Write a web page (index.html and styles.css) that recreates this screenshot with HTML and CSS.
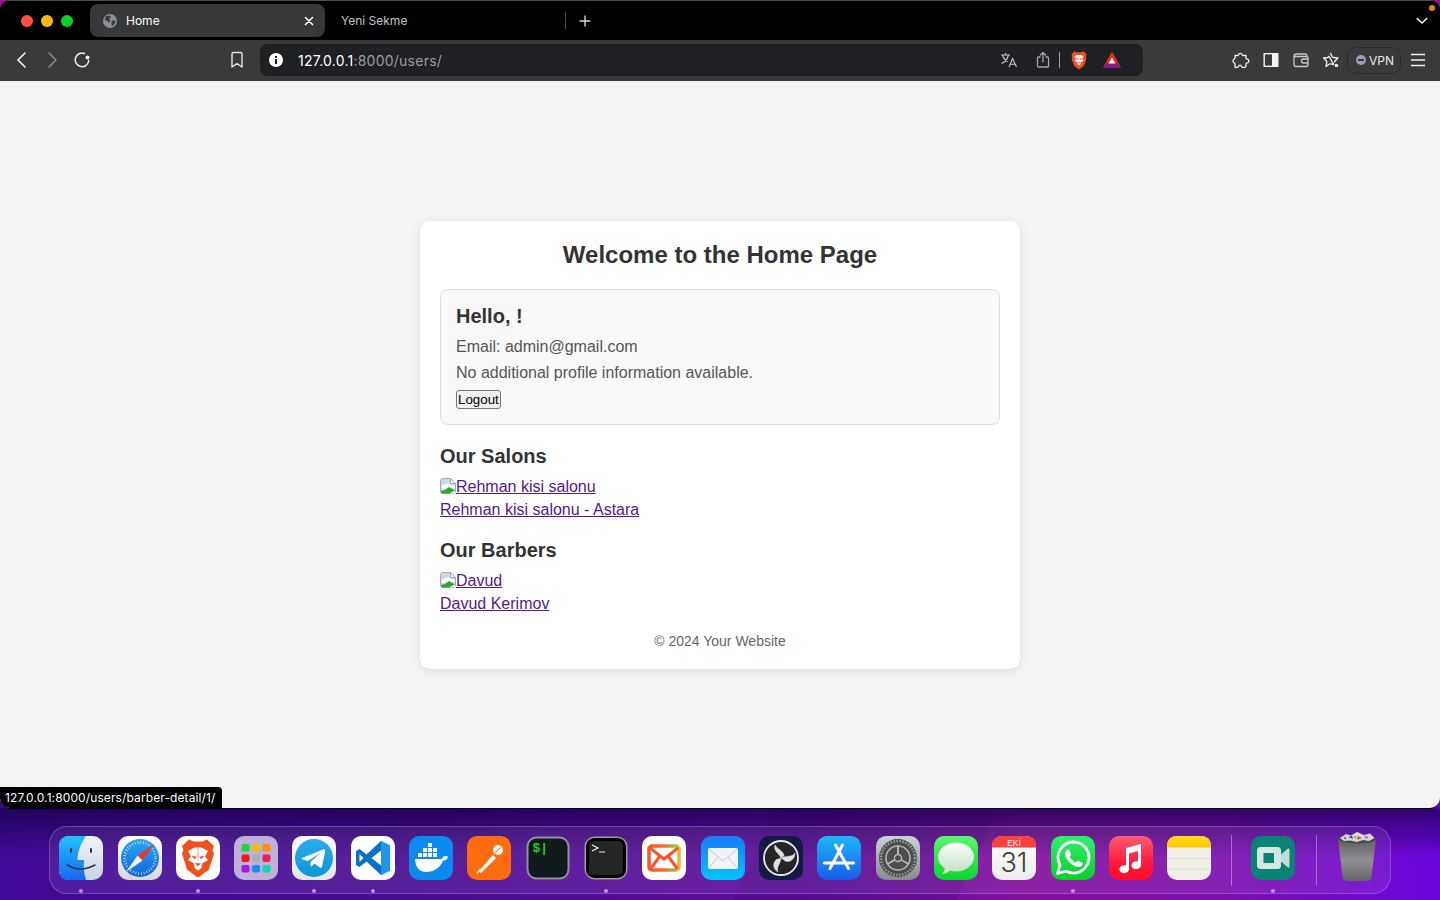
FILE: index.html
```html
<!DOCTYPE html>
<html lang="en">
<head>
<meta charset="utf-8">
<title>Home</title>
<link rel="stylesheet" href="styles.css">
</head>
<body>
<div class="window">
  <div class="tabstrip">
    <div class="lights"><span class="light red"></span><span class="light yellow"></span><span class="light green"></span></div>
    <div class="tab active">
      <svg class="favicon" viewBox="0 0 14 14"><circle cx="7" cy="7" r="7" fill="#8b8f99"/><path d="M3 2.2 L6.5 1.5 L8 3.2 L6 5 L7.5 6.5 L5.5 9 L4.5 7 L1.8 6 Z M9 6.5 L12.6 6.5 L11.5 10 L9 12 L8.4 9 Z" fill="#383838"/></svg>
      <span class="tab-title">Home</span>
      <svg class="tab-close" viewBox="0 0 10 10"><path d="M1.5 1.5 L8.5 8.5 M8.5 1.5 L1.5 8.5" stroke="#fff" stroke-width="1.6" stroke-linecap="round"/></svg>
    </div>
    <div class="tab inactive"><span>Yeni Sekme</span></div>
    <svg class="plus" viewBox="0 0 12 12"><path d="M6 .5 V11.5 M.5 6 H11.5" stroke="#d8d8d8" stroke-width="1.4"/></svg>
    <svg class="tab-menu" viewBox="0 0 12 8"><path d="M1.2 1.5 L6 6 L10.8 1.5" fill="none" stroke="#fff" stroke-width="1.5" stroke-linecap="round" stroke-linejoin="round"/></svg>
    <span class="notify-dot"></span>
  </div>

  <div class="toolbar">
    <button class="tool" aria-label="Back"><svg viewBox="0 0 20 20"><path d="M13 3 L6 10 L13 17" fill="none" stroke="#f2f2f2" stroke-width="1.6" stroke-linecap="round" stroke-linejoin="round"/></svg></button>
    <button class="tool" aria-label="Forward"><svg viewBox="0 0 20 20"><path d="M7 3 L14 10 L7 17" fill="none" stroke="#8a8a8a" stroke-width="1.6" stroke-linecap="round" stroke-linejoin="round"/></svg></button>
    <button class="tool" aria-label="Reload"><svg viewBox="0 0 20 20"><path d="M12.500 3.500 A6.800 6.800 0 1 0 16.800 10.500" fill="none" stroke="#f2f2f2" stroke-width="1.5" stroke-linecap="round"/><circle cx="15.500" cy="7.500" r="2" fill="#f2f2f2"/></svg></button>
    <button class="tool bookmark" aria-label="Bookmark"><svg viewBox="0 0 20 20"><path d="M5 4 Q5 2.5 6.5 2.5 H13.5 Q15 2.5 15 4 V17 L10 13.6 L5 17 Z" fill="none" stroke="#e4e4e4" stroke-width="1.4" stroke-linejoin="round"/></svg></button>
    <div class="urlbar">
      <svg class="info" viewBox="0 0 14 14"><circle cx="7" cy="7" r="7" fill="#fff"/><rect x="6" y="6" width="2" height="5" fill="#1f2023"/><rect x="6" y="3" width="2" height="2" fill="#1f2023"/></svg>
      <span class="url"><span class="url-host">127.0.0.1</span>:8000/users/</span>
      <svg class="url-icon translate" viewBox="0 0 18 16"><path d="M1 3 H10 M5.5 1 V3 M8.5 3 C7.5 7 5 10 1.5 11.5 M2.5 3 C3.5 6.5 5.5 8.5 8 9.5 M9 15 L12.5 6.5 L16.5 15 M10.3 12.3 H15" fill="none" stroke="#c9c9c9" stroke-width="1.1"/></svg>
      <svg class="url-icon share" viewBox="0 0 14 18"><path d="M4 6 H2.5 Q1.5 6 1.5 7 V15 Q1.5 16 2.5 16 H11.5 Q12.5 16 12.5 15 V7 Q12.5 6 11.5 6 H10 M7 11 V1.5 M4.3 4 L7 1.5 L9.7 4" fill="none" stroke="#a8a8a8" stroke-width="1.3" stroke-linecap="round" stroke-linejoin="round"/></svg>
      <span class="url-sep"></span>
      <svg class="url-icon brave-small" viewBox="0 0 24 24"><path d="M6.5 1.5 L9 2.8 H15 L17.5 1.5 L21 5 L20.2 8 L21 10 L18 19 L12.5 23 H11.5 L6 19 L3 10 L3.8 8 L3 5 Z" fill="#f1501f"/><path d="M6.5 7.5 L10 6 H14 L17.5 7.5 L15.6 11 L17.5 13 L14 14.8 L13.8 17.3 L12 18.5 L10.2 17.3 L10 14.8 L6.5 13 L8.4 11 Z" fill="#fff"/><path d="M8.800 9.800 L10.800 10.500 L10 11.800 Z M15.200 9.800 L13.200 10.500 L14 11.800 Z M10.500 14.800 H13.500 L12 16.300 Z M12 6.500 V13" fill="#f1501f" stroke="#f1501f" stroke-width=".4"/></svg>
      <svg class="url-icon bat" viewBox="0 0 18 16"><path d="M9 0 L18 15.500 H0 Z" fill="#ea2a1e"/><path d="M0 15.500 L3.800 11 H14.200 L18 15.500 Z" fill="#8a1a8f"/><path d="M9 5.500 L12.300 11.500 H5.700 Z" fill="#fff"/></svg>
    </div>
    <button class="tool first-ext" aria-label="Extensions"><svg viewBox="0 0 20 20"><path d="M7.500 5 C7.500 2.800 11 2.800 11 4.800 C11 5.500 11.800 5.500 12.600 5.500 H15 V8 C15 8.800 15.500 9 16.300 9.100 C18.300 9.400 18.300 12.600 16.300 12.900 C15.500 13 15 13.400 15 14.200 V16 C15 17 14.300 17.300 13.500 17.300 H11.500 C10.900 17.300 10.600 16.900 10.500 16.400 C10.200 14.800 7.800 14.800 7.500 16.400 C7.400 17 6.800 17.300 6.300 17.300 H4 V13.800 C4 13.200 3.600 13 3.100 12.800 C1.700 12 1.700 9.800 3.100 9 C3.600 8.800 4 8.400 4 7.800 V5.500 H6.500 C7 5.500 7.500 5.500 7.500 5 Z" fill="none" stroke="#f2f2f2" stroke-width="1.300" stroke-linejoin="round"/></svg></button>
    <button class="tool" aria-label="Sidebar"><svg viewBox="0 0 20 20"><rect x="3.2" y="3.7" width="13.6" height="12.6" fill="none" stroke="#f4f4f4" stroke-width="1.4"/><rect x="11" y="3.7" width="5.8" height="12.6" fill="#f4f4f4"/></svg></button>
    <button class="tool" aria-label="Wallet"><svg viewBox="0 0 20 20"><path d="M3 6.5 Q3 4 5.5 4 H14.5 Q16 4 16 6 M3 6.5 V14.5 Q3 16.5 5 16.5 H15 Q17 16.5 17 14.5 V8 Q17 6.5 15.5 6.5 H3 M17 9 H12.5 Q10.5 9 10.5 11 Q10.5 13 12.5 13 H17" fill="none" stroke="#c9c9c9" stroke-width="1.3"/></svg></button>
    <button class="tool" aria-label="Leo"><svg viewBox="0 0 20 20"><path d="M9.500 3 L11 6.500 Q11.500 7.500 12.500 7.500 L17 8 L14 11 Q13.500 11.700 13.700 12.500 M12.800 14.500 L9.500 13.800 Q9 13.800 8.500 14 L5 16.500 L5.800 12.300 Q6 11.500 5.300 10.800 L2.500 8 L6.500 7.500 Q7.500 7.300 8 6.300 Z" fill="none" stroke="#f2f2f2" stroke-width="1.300" stroke-linejoin="round"/><circle cx="15.500" cy="15.500" r="1.800" fill="#f2f2f2"/></svg></button>
    <div class="vpn"><span class="vpn-dot"></span><span>VPN</span></div>
    <button class="tool hamburger" aria-label="Menu"><svg viewBox="0 0 20 20"><path d="M3 4.5 H17 M3 10 H17 M3 15.5 H17" stroke="#f2f2f2" stroke-width="1.3"/></svg></button>
  </div>

  <main class="page">
    <section class="card">
      <h1 class="title">Welcome to the Home Page</h1>
      <div class="profile">
        <h2 class="heading heading-profile">Hello, !</h2>
        <p class="line">Email: admin@gmail.com</p>
        <p class="line">No additional profile information available.</p>
        <button class="logout">Logout</button>
      </div>
      <section class="group">
        <h2 class="heading">Our Salons</h2>
        <div class="item"><a class="link" href="#"><svg class="broken" viewBox="0 0 16 16"><path d="M0.5 3 Q0.5 0.5 3 0.5 H10.500 L15.500 5.500 V13 Q15.500 15.500 13 15.500 H3 Q0.500 15.500 0.500 13 Z" fill="#c9d8ee" stroke="#a9a9a9"/><path d="M10.500 .5 V5.500 H15.500 Z" fill="#f2f2f2" stroke="#a9a9a9"/><path d="M1.500 9 Q3 5.500 6 6.500 Q9 4.500 11 7 L15 8 V10 L2 11 Z" fill="#fff"/><path d="M1 14.500 V13 Q6 12 9 9 L15 12.500 V15.500 H2 Z" fill="#2fa82a"/><path d="M9 15.500 L15 12.500 V15.500 Z" fill="#fff"/></svg>Rehman kisi salonu</a></div>
        <div class="item name"><a class="link" href="#">Rehman kisi salonu - Astara</a></div>
      </section>
      <section class="group">
        <h2 class="heading">Our Barbers</h2>
        <div class="item"><a class="link" href="#"><svg class="broken" viewBox="0 0 16 16"><path d="M0.5 3 Q0.5 0.5 3 0.5 H10.500 L15.500 5.500 V13 Q15.500 15.500 13 15.500 H3 Q0.500 15.500 0.500 13 Z" fill="#c9d8ee" stroke="#a9a9a9"/><path d="M10.500 .5 V5.500 H15.500 Z" fill="#f2f2f2" stroke="#a9a9a9"/><path d="M1.500 9 Q3 5.500 6 6.500 Q9 4.500 11 7 L15 8 V10 L2 11 Z" fill="#fff"/><path d="M1 14.500 V13 Q6 12 9 9 L15 12.500 V15.500 H2 Z" fill="#2fa82a"/><path d="M9 15.500 L15 12.500 V15.500 Z" fill="#fff"/></svg>Davud</a></div>
        <div class="item name"><a class="link" href="#">Davud Kerimov</a></div>
      </section>
      <footer class="copyright">© 2024 Your Website</footer>
    </section>
    <div class="status">127.0.0.1:8000/users/barber-detail/1/</div>
  </main>
</div>

<nav class="dock">
  <div class="app running"><svg viewBox="0 0 44 44"><defs><linearGradient id="fa" x1="0" y1="0" x2="0" y2="1"><stop offset="0" stop-color="#1fc0fb"/><stop offset="1" stop-color="#1a68f2"/></linearGradient><linearGradient id="fb" x1="0" y1="0" x2="0" y2="1"><stop offset="0" stop-color="#f0f4f8"/><stop offset="1" stop-color="#c8d4e0"/></linearGradient></defs><rect width="44" height="44" rx="10" fill="url(#fb)"/><path d="M10 0 H27 C21 8 18.500 17 18.500 24 H25 C24.500 31 25 38 27 44 H10 Q0 44 0 34 V10 Q0 0 10 0 Z" fill="url(#fa)"/><rect x="11" y="12" width="2" height="5" rx="1" fill="#27303f"/><rect x="31" y="12" width="2" height="5" rx="1" fill="#27303f"/><path d="M8.500 29 Q21 37 36 29" fill="none" stroke="#27303f" stroke-width="1.500" stroke-linecap="round"/></svg></div>
  <div class="app"><svg viewBox="0 0 44 44"><defs><linearGradient id="sa" x1="0" y1="0" x2="0" y2="1"><stop offset="0" stop-color="#fff"/><stop offset="1" stop-color="#d8d8d8"/></linearGradient><linearGradient id="sb" x1="0" y1="0" x2="0" y2="1"><stop offset="0" stop-color="#27a9f2"/><stop offset="1" stop-color="#1464e0"/></linearGradient></defs><rect width="44" height="44" rx="10" fill="url(#sa)"/><circle cx="22" cy="22" r="19" fill="url(#sb)"/><circle cx="22" cy="22" r="15.500" fill="none" stroke="#dceaf8" stroke-width="2.500" stroke-dasharray="0.800 2"/><path d="M36 8 L19.500 19.500 L24.500 24.500 Z" fill="#f0352f"/><path d="M8 36 L19.500 19.500 L24.500 24.500 Z" fill="#f4f4f4"/></svg></div>
  <div class="app running"><svg viewBox="0 0 44 44"><rect width="44" height="44" rx="10" fill="#fff"/><path d="M13 3.500 L17.500 5.500 H26.500 L31 3.500 L38 10 L36.500 14 L38 17.500 L33 33.500 L23 41 H21 L11 33.500 L6 17.500 L7.500 14 L6 10 Z" fill="#f1501f"/><path d="M12 15 L18.500 11.500 H25.500 L32 15 L29 20.500 L32 24 L26 27.500 L25.500 32 L22 34.500 L18.500 32 L18 27.500 L12 24 L15 20.500 Z" fill="#fff"/><path d="M16 20 L20 21 L19 23 Z M28 20 L24 21 L25 23 Z M19.500 27.500 H24.500 L22 30 Z M22 12 V24" fill="#f1501f" stroke="#f1501f" stroke-width=".6"/></svg></div>
  <div class="app"><svg viewBox="0 0 44 44"><rect width="44" height="44" rx="10" fill="#bfb0d8"/><rect x="7.500" y="8" width="8" height="7.500" rx="2" fill="#1fd63a"/><rect x="18" y="8" width="8" height="7.500" rx="2" fill="#fbb90b"/><rect x="28.500" y="8" width="8" height="7.500" rx="2" fill="#f98f0e"/><rect x="7.500" y="18.500" width="8" height="7.500" rx="2" fill="#ea1b1b"/><rect x="18" y="18.500" width="8" height="7.500" rx="2" fill="#a8b0b6"/><rect x="28.500" y="18.500" width="8" height="7.500" rx="2" fill="#f01b5e"/><rect x="7.500" y="29" width="8" height="7.500" rx="2" fill="#a51bdf"/><rect x="18" y="29" width="8" height="7.500" rx="2" fill="#1b8bf5"/><rect x="28.500" y="29" width="8" height="7.500" rx="2" fill="#12d7b2"/></svg></div>
  <div class="app running"><svg viewBox="0 0 44 44"><defs><linearGradient id="ta" x1="0" y1="0" x2="0" y2="1"><stop offset="0" stop-color="#2aabee"/><stop offset="1" stop-color="#0e96d6"/></linearGradient><linearGradient id="tb" x1="0" y1="0" x2="0" y2="1"><stop offset="0" stop-color="#fff"/><stop offset="1" stop-color="#e6e6e6"/></linearGradient></defs><rect width="44" height="44" rx="10" fill="url(#tb)"/><circle cx="22" cy="22" r="19" fill="url(#ta)"/><path d="M10 22 L31 13.500 C32.500 13 33.500 13.800 33.200 15.300 L30 30.500 C29.700 31.800 28.700 32 27.800 31.400 L22.500 27.500 L19.800 30.200 C19.200 30.800 18.500 30.500 18.500 29.700 L18.500 26 L28.500 17 L15.800 25 L10.200 23.300 C9.300 23 9.300 22.400 10 22 Z" fill="#fff"/></svg></div>
  <div class="app running"><svg viewBox="0 0 44 44"><rect width="44" height="44" rx="10" fill="#fff"/><path d="M30 5 L39 9.500 V34.500 L30 39 L15.500 25.500 L8.500 31 L5 29 V15 L8.500 13 L15.500 18.500 Z M30 14.500 L20.500 22 L30 29.500 Z M8.500 18 V26 L12.500 22 Z" fill="#0a6fc2" fill-rule="evenodd"/><path d="M30 5 L39 9.500 V34.500 L30 39 Z" fill="#2197e8"/></svg></div>
  <div class="app"><svg viewBox="0 0 44 44"><rect width="44" height="44" rx="10" fill="#0b8af0"/><path d="M6 23 H33 C33.500 20.500 36 19 39 20.500 C38.500 23 37 24.500 34 24.500 C31 32 25 36 17 36 C10 36 6.500 31 6 23 Z" fill="#fff"/><path d="M9 17 H13 V21 H9 Z M14 17 H18 V21 H14 Z M19 17 H23 V21 H19 Z M24 17 H28 V21 H24 Z M14 12 H18 V16 H14 Z M19 12 H23 V16 H19 Z M24 12 H28 V16 H24 Z M19 7 H23 V11 H19 Z" fill="#fff"/></svg></div>
  <div class="app"><svg viewBox="0 0 44 44"><rect width="44" height="44" rx="10" fill="#ff6c0f"/><path d="M12 35 L26 19 L29 22 L14 37 Z" fill="#fff"/><circle cx="31" cy="14" r="5" fill="#fff"/><path d="M9 38 L12.500 33 L14.500 35 Z" fill="#fff"/><path d="M28 17 L34 11" stroke="#ff6c0f" stroke-width="1"/></svg></div>
  <div class="app"><svg viewBox="0 0 44 44"><rect x=".5" y=".5" width="43" height="43" rx="10" fill="#8c9498"/><rect x="2.500" y="2.500" width="39" height="39" rx="8" fill="#10191c"/><text class="iterm-text" x="6.500" y="16">$|</text></svg></div>
  <div class="app running"><svg viewBox="0 0 44 44"><rect x=".5" y=".5" width="43" height="43" rx="10" fill="#9a9a9a"/><rect x="2" y="2" width="40" height="40" rx="8.500" fill="#000"/><rect x="5" y="5" width="34" height="34" rx="5" fill="#252525"/><path d="M8 9 L14 12 L8 15 M15 16 H21" fill="none" stroke="#f0f0f0" stroke-width="1.200"/></svg></div>
  <div class="app"><svg viewBox="0 0 44 44"><defs><linearGradient id="ma" x1="0" y1="0" x2="1" y2="0"><stop offset="0" stop-color="#f7552c"/><stop offset=".55" stop-color="#f8702c"/><stop offset=".78" stop-color="#7fc05a"/><stop offset="1" stop-color="#f8b32c"/></linearGradient></defs><rect width="44" height="44" rx="10" fill="#fff"/><rect x="7" y="10" width="30" height="24" rx="3" fill="none" stroke="url(#ma)" stroke-width="3.500"/><path d="M8 12 L22 23 L36 12 M8.500 33 L18 20 M35.500 33 L26 20" fill="none" stroke="#f7552c" stroke-width="3"/></svg></div>
  <div class="app"><svg viewBox="0 0 44 44"><defs><linearGradient id="ea" x1="0" y1="0" x2="0" y2="1"><stop offset="0" stop-color="#1a7bf8"/><stop offset="1" stop-color="#05c4fb"/></linearGradient></defs><rect width="44" height="44" rx="10" fill="url(#ea)"/><rect x="7" y="12" width="30" height="21" rx="2" fill="#f1f3f6"/><path d="M7.500 13 L22 25 L36.500 13 M7.500 32 L17.500 21 M36.500 32 L26.500 21" fill="none" stroke="#bcc4d0" stroke-width=".9"/></svg></div>
  <div class="app"><svg viewBox="0 0 44 44"><rect width="44" height="44" rx="10" fill="#141a44"/><circle cx="22" cy="22" r="17" fill="#252528" stroke="#e8e8e8" stroke-width="1.800"/><path d="M22 22 C20 17 14 15 16 9 C19 14 25 15 25 20 M22 22 C27 19 33 22 36 17 C36 23 31 27 26 25 M22 22 C22 27 17 31 19 36 C14 33 13 27 18 23" fill="#e0e0e0" stroke="#e0e0e0" stroke-width=".5"/></svg></div>
  <div class="app"><svg viewBox="0 0 44 44"><defs><linearGradient id="aa" x1="0" y1="0" x2="0" y2="1"><stop offset="0" stop-color="#1db6f8"/><stop offset="1" stop-color="#1a5ce8"/></linearGradient></defs><rect width="44" height="44" rx="10" fill="url(#aa)"/><path d="M25.500 9 L13 32.500 M18.500 9 L31.500 32.500 M7.500 27 H36.500" stroke="#fff" stroke-width="3" stroke-linecap="round"/></svg></div>
  <div class="app"><svg viewBox="0 0 44 44"><defs><linearGradient id="ga" x1="0" y1="0" x2="0" y2="1"><stop offset="0" stop-color="#c9d2d8"/><stop offset="1" stop-color="#8a8a8a"/></linearGradient></defs><rect width="44" height="44" rx="10" fill="url(#ga)"/><circle cx="22" cy="22" r="19" fill="#4d4d4f"/><circle cx="22" cy="22" r="17" fill="none" stroke="#9a9a9a" stroke-width="2.500" stroke-dasharray="1.500 1.500"/><circle cx="22" cy="22" r="12" fill="none" stroke="#b6b6b6" stroke-width="1.600"/><path d="M22 22 V10 M22 22 L11.500 28 M22 22 L32.500 28" stroke="#b6b6b6" stroke-width="2"/><circle cx="22" cy="22" r="3.500" fill="#4d4d4f" stroke="#b6b6b6" stroke-width="1.400"/></svg></div>
  <div class="app"><svg viewBox="0 0 44 44"><defs><linearGradient id="me" x1="0" y1="0" x2="0" y2="1"><stop offset="0" stop-color="#5cf66f"/><stop offset="1" stop-color="#08d62e"/></linearGradient><linearGradient id="mf" x1="0" y1="0" x2="0" y2="1"><stop offset="0" stop-color="#fff"/><stop offset="1" stop-color="#c4e0c8"/></linearGradient></defs><rect width="44" height="44" rx="10" fill="url(#me)"/><ellipse cx="22" cy="21" rx="18" ry="14.500" fill="url(#mf)"/><path d="M11 30 Q11 36 7.500 38 Q14 38 17 33 Z" fill="#d4e6d6"/></svg></div>
  <div class="app"><svg viewBox="0 0 44 44"><defs><linearGradient id="ca" x1="0" y1="0" x2="0" y2="1"><stop offset="0" stop-color="#fff"/><stop offset="1" stop-color="#ececec"/></linearGradient></defs><rect width="44" height="44" rx="10" fill="url(#ca)"/><path d="M0 11.500 V10 Q0 0 10 0 H34 Q44 0 44 10 V11.500 Z" fill="#f8413a"/><text class="cal-month" x="22" y="9.500">EKİ</text><text class="cal-day" x="22" y="36">31</text></svg></div>
  <div class="app running"><svg viewBox="0 0 44 44"><defs><linearGradient id="wa" x1="0" y1="0" x2="0" y2="1"><stop offset="0" stop-color="#2ff06a"/><stop offset="1" stop-color="#09cf2b"/></linearGradient></defs><rect width="44" height="44" rx="10" fill="url(#wa)"/><path d="M22.500 6 A15.500 15.500 0 0 0 9 29 L6.500 37.500 L15.200 35.200 A15.500 15.500 0 1 0 22.500 6 Z" fill="none" stroke="#fff" stroke-width="2.800" stroke-linejoin="round"/><path d="M16.500 13.500 C15 14.200 13.500 16 14 18.500 C15 23.500 21 30 26.500 31 C29 31.400 31 30.300 31.500 28.500 C31.700 27.500 31.700 27 31.300 26.700 L27.500 24.800 C26.900 24.500 26.500 24.700 26 25.300 L25 26.500 C22.700 25.700 19.700 23 18.700 20.700 L19.800 19.300 C20.200 18.800 20.200 18.400 20 18 L18.300 14 C18 13.500 17.200 13.400 16.500 13.500 Z" fill="#fff"/></svg></div>
  <div class="app"><svg viewBox="0 0 44 44"><defs><linearGradient id="mu" x1="0" y1="0" x2="0" y2="1"><stop offset="0" stop-color="#fb5c74"/><stop offset=".6" stop-color="#ff1a3c"/><stop offset="1" stop-color="#ff0a2a"/></linearGradient></defs><rect width="44" height="44" rx="10" fill="url(#mu)"/><path d="M17 12 L32 8 V29 A4.800 4 0 1 1 29 25.500 V15 L20 17.500 V33 A4.800 4 0 1 1 17 29.500 Z" fill="#fff"/></svg></div>
  <div class="app"><svg viewBox="0 0 44 44"><defs><linearGradient id="no" x1="0" y1="0" x2="0" y2="1"><stop offset="0" stop-color="#ffdc1a"/><stop offset="1" stop-color="#fdc705"/></linearGradient></defs><rect width="44" height="44" rx="10" fill="#f1eee8"/><path d="M0 11.500 V10 Q0 0 10 0 H34 Q44 0 44 10 V11.500 Z" fill="url(#no)"/><path d="M0 22.500 H44 M0 33 H44" stroke="#d4d1ca" stroke-width=".7"/></svg></div>
  <span class="dock-sep"></span>
  <div class="app running"><svg viewBox="0 0 44 44"><rect width="44" height="44" rx="10" fill="#0b8276"/><rect x="6" y="11" width="24" height="22" rx="3.500" fill="#d3e6e2"/><rect x="12.500" y="17" width="10.500" height="10" fill="#0b8276"/><path d="M30 18.500 L37 12.500 Q38.500 12 38.500 13.500 V30.500 Q38.500 32 37 31.500 L30 25.500 Z" fill="#c2dcd8"/></svg></div>
  <span class="dock-sep"></span>
  <div class="app trash"><svg viewBox="0 0 44 52"><defs><linearGradient id="tr" x1="0" y1="0" x2="0" y2="1"><stop offset="0" stop-color="#5e5e62"/><stop offset=".5" stop-color="#8f8f93"/><stop offset="1" stop-color="#66666a"/></linearGradient></defs><path d="M3 8 Q22 15 41 8 L36.500 46 Q36 50 30 50 H14 Q8 50 7.500 46 Z" fill="url(#tr)"/><ellipse cx="22" cy="8" rx="19" ry="4.500" fill="#4a4a4e"/><path d="M5 7 L11 3 L16 4.500 L22 1 L29 4 L35 2.500 L39.500 7 L34 10 L28 9 L22 11 L15 9.500 L9 10 Z" fill="#d8d8d8"/><path d="M13 6 L17 4.500 L18 8 Z" fill="#555"/><path d="M23 5 L27 7 L22 9 Z" fill="#d6523c"/><path d="M29 5.500 L33 5.500 L32 8 Z" fill="#3f7fd0"/><path d="M19 5 L22 6 L20 8 Z" fill="#2fb7a0"/><path d="M8 7 L11 6 L11 8.500 Z" fill="#555"/></svg></div>
</nav>
</body>
</html>
```

FILE: styles.css
```css
* { box-sizing: border-box; }

html, body { height: 100%; }

body {
  margin: 0;
  height: 900px;
  overflow: hidden;
  font-family: "Liberation Sans", Arial, sans-serif;
  background:
    linear-gradient(115deg, transparent 0 62%, rgba(30, 0, 90, .15) 62% 74%, transparent 74%),
    linear-gradient(180deg, #a0148c 0, #6a1090 12px, rgba(20, 0, 60, 0) 12px),
    linear-gradient(180deg, rgba(20, 0, 70, 0) 0, rgba(20, 0, 70, 0) 806px, rgba(20, 0, 70, .7) 810px, rgba(20, 0, 70, .45) 826px, rgba(20, 0, 70, 0) 858px),
    linear-gradient(90deg, #3f0a96 0, #4a0c92 30%, #5f0d9e 55%, #84109f 72%, #7d0fae 85%, #6a06dc 100%);
}

.window {
  height: 808px;
  display: flex;
  flex-direction: column;
  border-radius: 10px;
  overflow: hidden;
  box-shadow: 0 1px 1px #000;
}

/* Tab strip */
.tabstrip {
  height: 40px;
  flex: none;
  display: flex;
  align-items: center;
  background: #000;
  border-top: 1px solid #4c4c4c;
  position: relative;
  font-family: Inter, "Liberation Sans", sans-serif;
}

.lights {
  display: flex;
  gap: 8px;
  padding-left: 21px;
}

.light {
  width: 12px;
  height: 12px;
  border-radius: 50%;
}

.red { background: #ff4f46; }
.yellow { background: #febb0b; }
.green { background: #09d02f; }

.tab {
  height: 33px;
  display: flex;
  align-items: center;
  font-size: 12px;
}

.active {
  margin-left: 17px;
  width: 235px;
  padding: 0 11px 0 13px;
  background: #383838;
  border-radius: 8px;
  color: #fff;
}

.favicon {
  width: 14px;
  height: 14px;
  margin-right: 9px;
}

.tab-title { flex: 1; }

.tab-close {
  width: 10px;
  height: 10px;
}

.inactive {
  width: 241px;
  padding-left: 16px;
  color: #c4c4c4;
  position: relative;
}

.inactive::after {
  content: "";
  position: absolute;
  right: 0;
  top: 8px;
  height: 17px;
  width: 1px;
  background: #4c4c4c;
}

.plus {
  width: 12px;
  height: 12px;
  margin-left: 13px;
}

.tab-menu {
  width: 12px;
  height: 8px;
  margin-left: auto;
  margin-right: 12px;
}

.notify-dot {
  position: absolute;
  right: 5px;
  top: 4px;
  width: 6px;
  height: 6px;
  border-radius: 50%;
  background: #e08a10;
}

/* Toolbar */
.toolbar {
  height: 41px;
  flex: none;
  display: flex;
  align-items: center;
  gap: 10px;
  padding: 0 0 1px 12px;
  background: #3a3a3a;
  font-family: Inter, "Liberation Sans", sans-serif;
}

.tool {
  width: 20px;
  height: 20px;
  padding: 0;
  border: 0;
  background: none;
  flex: none;
}

.tool svg {
  display: block;
  width: 20px;
  height: 20px;
}

.bookmark { margin-left: 125px; }

.urlbar {
  margin-left: 3px;
  width: 883px;
  height: 32px;
  flex: none;
  display: flex;
  align-items: center;
  padding-left: 9px;
  background: #1f2023;
  border-radius: 8px;
}

.info {
  width: 14px;
  height: 14px;
  margin-right: 15px;
}

.url {
  flex: 1;
  font-size: 14px;
  letter-spacing: .24px;
  color: #9d9d9d;
}

.url-host { color: #fff; }

.url-icon { flex: none; }

.translate {
  width: 18px;
  height: 16px;
}

.share {
  width: 14px;
  height: 18px;
  margin-left: 18px;
}

.url-sep {
  width: 1px;
  height: 16px;
  margin-left: 9px;
  background: #a0a0a0;
}

.brave-small {
  width: 20px;
  height: 20px;
  margin-left: 9px;
}

.bat {
  width: 18px;
  height: 16px;
  margin-left: 14px;
  margin-right: 22px;
}

.first-ext { margin-left: 78px; }

.vpn {
  margin-left: -4px;
  width: 54px;
  height: 27px;
  flex: none;
  display: flex;
  align-items: center;
  gap: 3px;
  padding-left: 8px;
  border: 1px solid #2c2c2c;
  border-radius: 9px;
  font-size: 12px;
  color: #e8e8e8;
}

.vpn-dot {
  width: 10px;
  height: 10px;
  border-radius: 50%;
  background: #9a9cbc;
  position: relative;
}

.vpn-dot::after {
  content: "";
  position: absolute;
  left: 2px;
  right: 2px;
  top: 4px;
  height: 2px;
  background: #3a3a3a;
}

.hamburger { margin-left: -3px; }

/* Page */
.page {
  flex: 1;
  display: flex;
  align-items: center;
  justify-content: center;
  background: #f4f4f4;
  position: relative;
}

.card {
  width: 600px;
  padding: 20px;
  background: #fff;
  border-radius: 10px;
  box-shadow: 0 2px 10px rgba(0, 0, 0, .1);
  color: #333;
}

.title {
  margin: 0 0 20px;
  font-size: 24px;
  text-align: center;
}

.profile {
  padding: 15px;
  background: #f9f9f9;
  border: 1px solid #ddd;
  border-radius: 8px;
}

.heading {
  margin: 0 0 10px;
  font-size: 20px;
}

.line {
  margin: 0 0 8px;
  font-size: 16px;
  color: #555;
}

.logout {
  display: block;
  height: 19px;
  padding: 0 1px;
  border: 1px solid #767676;
  border-radius: 3px;
  background: #efefef;
  color: #000;
  font: 13.333px "Liberation Sans", Arial, sans-serif;
}

.group { margin-top: 20px; }

.item {
  font-size: 16px;
  line-height: 18px;
}

.name { margin-top: 5px; }

.link { color: #551a8b; }

.broken {
  width: 16px;
  height: 16px;
  vertical-align: -2px;
}

.copyright {
  margin-top: 20px;
  font-size: 14px;
  text-align: center;
  color: #666;
}

.status {
  position: absolute;
  left: 0;
  bottom: 0;
  width: 222px;
  height: 21px;
  padding-left: 5px;
  line-height: 21px;
  font-family: Inter, "Liberation Sans", sans-serif;
  font-size: 12px;
  letter-spacing: .11px;
  white-space: nowrap;
  color: #fff;
  background: #000;
  border-top-right-radius: 4px;
}

/* Dock */
.dock {
  margin: 18px 0 0 49px;
  width: 1342px;
  height: 68px;
  display: flex;
  align-items: flex-start;
  gap: 14.32px;
  padding: 9px 0 0 9.2px;
  border: 1px solid rgba(200, 150, 240, .35);
  border-radius: 18px;
  background: rgba(255, 255, 255, .08);
}

.app {
  width: 44px;
  height: 44px;
  flex: none;
  position: relative;
}

.app svg {
  display: block;
  width: 44px;
  height: 44px;
}

.running::after {
  content: "";
  position: absolute;
  left: 20px;
  top: 53px;
  width: 4px;
  height: 4px;
  border-radius: 50%;
  background: #c88cf5;
}

.trash { height: 52px; margin-top: -5px; }

.trash svg { height: 52px; }

.dock-sep {
  width: 1px;
  height: 51px;
  flex: none;
  margin: -1px 4.5px 0 6px;
  background: rgba(210, 160, 245, .6);
}

.iterm-text {
  font: bold 13px "Liberation Mono", monospace;
  fill: #1fd02a;
}

.cal-month {
  font: 8.5px "Liberation Sans", Arial, sans-serif;
  fill: #fff;
  text-anchor: middle;
}

.cal-day {
  font: 300 27px Inter, "Liberation Sans", sans-serif;
  fill: #3c3c3c;
  text-anchor: middle;
}
```
